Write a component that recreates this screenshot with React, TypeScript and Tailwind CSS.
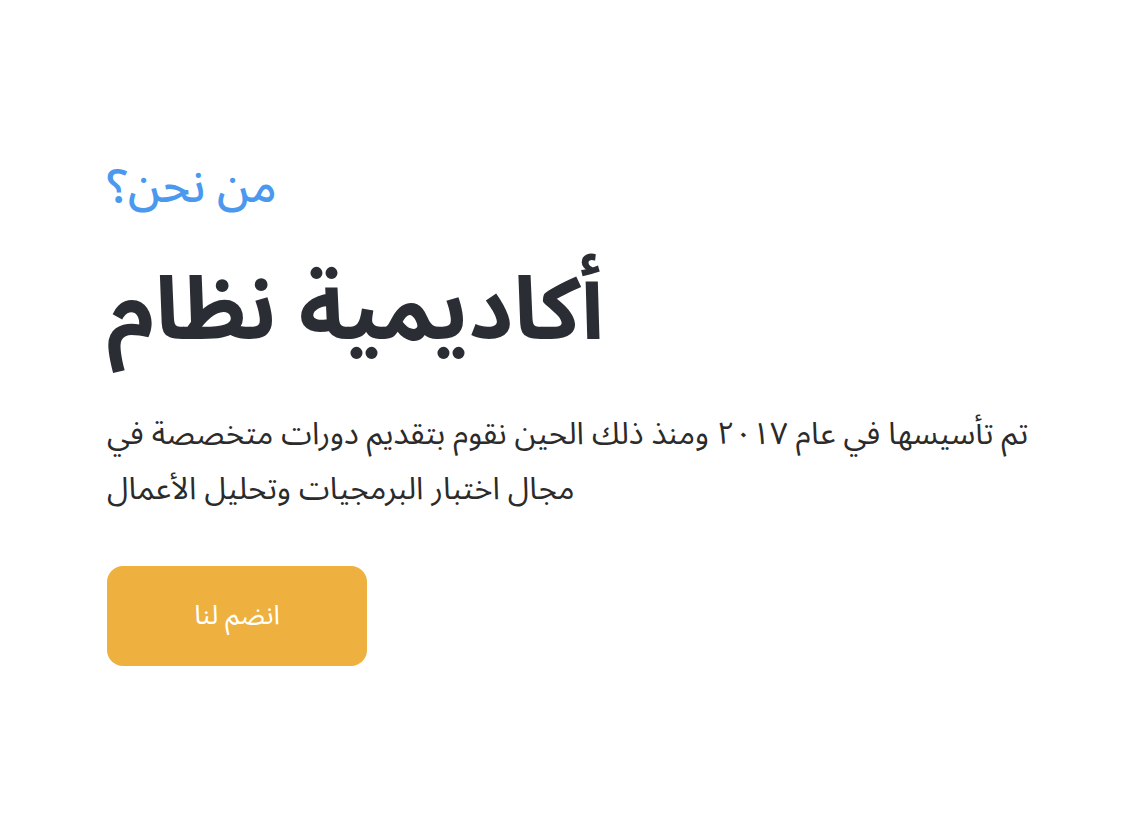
export default function App() {
  return (
    <div className="min-h-[830px] w-full bg-white font-['Noto_Sans_Arabic','DejaVu_Sans',sans-serif]">
      <section className="px-[107px] pt-[158px]">
        <h3 className="text-[46px] leading-[60px] font-medium text-[#4a99ee]">من نحن؟</h3>
        <h1 className="mt-[33px] text-[87px] leading-[120px] font-bold text-[#2a2d33]">أكاديمية نظام</h1>
        <p className="mt-[36px] max-w-[932px] text-[31px] leading-[55px] text-[#2b2b2b]">
          تم تأسيسها في عام ٢٠١٧ ومنذ ذلك الحين نقوم بتقديم دورات متخصصة في مجال اختبار البرمجيات وتحليل الأعمال
        </p>
        <button className="mt-[49px] flex h-[100px] w-[260px] items-center justify-center rounded-[16px] bg-[#eeb03f] text-[27px] text-white">
          انضم لنا
        </button>
      </section>
    </div>
  );
}
